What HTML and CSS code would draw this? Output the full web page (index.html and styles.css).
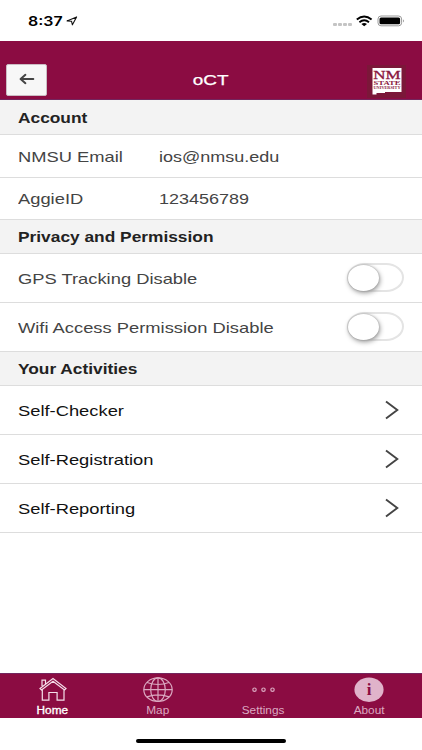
FILE: index.html
```html
<!DOCTYPE html>
<html lang="en">
<head>
<meta charset="utf-8">
<title>oCT</title>
<link rel="stylesheet" href="styles.css">
</head>
<body>
<div class="status">
  <span class="time"><span class="wide">8:37</span></span>
  <svg class="loc" width="12" height="10" viewBox="0 0 12 10"><path d="M1 4.9 10.6.9 6.4 8.8 5.5 5.2Z" fill="none" stroke="#111" stroke-width="1.1" stroke-linejoin="round"/></svg>
  <svg class="signals" width="74" height="14" viewBox="0 0 74 14">
    <g fill="#c4c4c4"><rect x="1" y="8" width="4" height="3" rx="1"/><rect x="6" y="8" width="4" height="3" rx="1"/><rect x="11" y="8" width="4" height="3" rx="1"/><rect x="16" y="8" width="4" height="3" rx="1"/></g>
    <g fill="none" stroke="#000" stroke-width="1.9"><path d="M24.8 4.6Q32.2-1.5 39.6 4.6M27.4 7.3Q32.2 3.4 37 7.3"/></g>
    <path d="M29.4 9Q32.2 7 35 9L32.2 11.2Z"/>
    <rect x="46" y="1" width="23.6" height="9.8" rx="3" fill="none" stroke="#999"/>
    <rect x="47.5" y="2.5" width="20.6" height="6.8" rx="1.5"/>
    <path d="M71.1 4.2Q72.9 5.9 71.1 7.6Z" fill="#777"/>
  </svg>
</div>
<header class="header">
  <button class="back" aria-label="Back"><svg width="16" height="12" viewBox="0 0 16 12"><path d="M14.3 6H2M6.4 1.8 1.6 6l4.8 4.2" fill="none" stroke="#444" stroke-width="2" stroke-linecap="round" stroke-linejoin="round"/></svg></button>
  <h1><span class="wide">oCT</span></h1>
  <svg class="logo" width="39" height="33" viewBox="0 0 39 33">
    <rect width="39" height="33" fill="#7b1739"/>
    <path d="M5.5 3H34.5V27H18V28H9.5V29.5H5.5Z" fill="#fff"/>
    <g fill="#8a1740" font-family="Liberation Serif, serif">
      <text x="6.2" y="13.8" font-size="13.5" textLength="27.4" lengthAdjust="spacingAndGlyphs" stroke="#8a1740" stroke-width=".3">NM</text>
      <text x="6.5" y="20" font-size="6.8" font-weight="bold" textLength="27" lengthAdjust="spacingAndGlyphs">STATE</text>
      <text x="6.5" y="24" font-size="3.8" font-weight="bold" textLength="27" lengthAdjust="spacingAndGlyphs">UNIVERSITY</text>
    </g>
  </svg>
</header>
<main>
  <h2><span class="wide">Account</span></h2>
  <div class="row info"><span class="label"><span class="wide">NMSU Email</span></span><span class="wide value">ios@nmsu.edu</span></div>
  <div class="row info last"><span class="label"><span class="wide">AggieID</span></span><span class="wide value">123456789</span></div>
  <h2 class="short"><span class="wide">Privacy and Permission</span></h2>
  <div class="row"><span class="wide">GPS Tracking Disable</span><span class="toggle"><span class="knob"></span></span></div>
  <div class="row"><span class="wide">Wifi Access Permission Disable</span><span class="toggle"><span class="knob"></span></span></div>
  <h2 class="short"><span class="wide">Your Activities</span></h2>
  <div class="row link"><span class="wide">Self-Checker</span><svg class="chevron" width="14" height="20" viewBox="0 0 14 20"><path d="M1 1.5 12.3 10 1 18.5"/></svg></div>
  <div class="row link"><span class="wide">Self-Registration</span><svg class="chevron" width="14" height="20" viewBox="0 0 14 20"><path d="M1 1.5 12.3 10 1 18.5"/></svg></div>
  <div class="row link"><span class="wide">Self-Reporting</span><svg class="chevron" width="14" height="20" viewBox="0 0 14 20"><path d="M1 1.5 12.3 10 1 18.5"/></svg></div>
</main>
<nav class="tabs">
  <div class="tab active"><svg width="30" height="26" viewBox="0 0 30 26"><path d="M2 11.5 15 1.5 28 11.5 26.5 13 15 4.3 3.5 13ZM4 9V3.2H7.5V7M4.3 12.8V23.2H10.9V15.5H19.1V23.2H26V12.8"/></svg><span class="wide">Home</span></div>
  <div class="tab"><svg width="30" height="26" viewBox="0 0 30 26"><ellipse cx="15" cy="12.7" rx="14.2" ry="11.8"/><ellipse cx="15" cy="12.7" rx="7.3" ry="11.8"/><path d="M15 .9V24.5M.8 12.7H29.2M4 5.5Q15 9.5 26 5.5M4 19.9Q15 15.9 26 19.9"/></svg><span class="wide">Map</span></div>
  <div class="tab"><svg width="30" height="26" viewBox="0 0 30 26"><circle cx="5.5" cy="12.7" r="1.7"/><circle cx="14.5" cy="12.7" r="1.7"/><circle cx="23.5" cy="12.7" r="1.7"/></svg><span class="wide">Settings</span></div>
  <div class="tab"><svg width="30" height="26" viewBox="0 0 30 26"><ellipse class="disc" cx="15" cy="12.7" rx="14.6" ry="12.2"/><text class="letter" x="15" y="18.4" text-anchor="middle">i</text></svg><span class="wide">About</span></div>
</nav>
<footer><div class="home-bar"></div></footer>
</body>
</html>
```
FILE: styles.css
```css
* { box-sizing: border-box; }
body {
  margin: 0;
  width: 422px;
  height: 750px;
  overflow: hidden;
  display: flex;
  flex-direction: column;
  background: #fff;
  font-family: "Liberation Sans", Arial, sans-serif;
  font-size: 15px;
  color: #444;
}
.wide {
  display: inline-block;
  white-space: nowrap;
  transform: scaleX(1.222);
  transform-origin: left center;
}
.wide.value { transform: scaleX(1.2); }
.status {
  height: 41px;
  flex: none;
  display: flex;
  align-items: flex-start;
  padding: 14px 16px 0 28px;
}
.time {
  width: 38px;
  font: 600 13.5px/14px Inter, sans-serif;
  color: #000;
}
.time .wide { transform: scaleX(1.18); }
.loc { margin-top: 2px; }
.signals { margin: 1px 0 0 auto; }
.header {
  height: 59px;
  flex: none;
  display: grid;
  grid-template-columns: 1fr auto 1fr;
  align-items: start;
  padding: 23px 16px 0 6px;
  background: #8b0c42;
  border-bottom: 1px solid #73265e;
}
.back {
  width: 41px;
  height: 32px;
  padding: 0;
  display: flex;
  align-items: center;
  justify-content: center;
  background: #f7f7f7;
  border: 1px solid #cbbdc4;
  border-radius: 2px;
}
.back svg { margin-top: -2px; }
h1 {
  margin: 7px 0 0 10px;
  font-size: 15.5px;
  line-height: 18px;
  font-weight: 400;
  color: #fff;
}
h1 .wide { transform-origin: center; -webkit-text-stroke: .25px; }
.logo { justify-self: end; margin-top: 1px; }
main { flex: 1; }
h2 {
  margin: 0;
  height: 35px;
  padding: 1px 0 0 18px;
  display: flex;
  align-items: center;
  background: #f3f3f3;
  border-bottom: 1px solid #ddd;
  font-size: 15px;
  color: #222;
}
h2 .wide { transform: scaleX(1.155); }
h2.short { height: 34px; padding-top: 0; }
.row {
  height: 49px;
  padding: 0 18px;
  display: flex;
  align-items: center;
  border-bottom: 1px solid #ddd;
}
.info { height: 43px; padding-top: 1px; }
.info.last { height: 42px; padding-top: 0; }
.label { width: 141px; }
.link { color: #111; }
.toggle {
  width: 57px;
  height: 29px;
  margin: -2px 0 0 auto;
  border: 2px solid #e4e4e4;
  border-radius: 18px / 14.5px;
}
.knob {
  display: block;
  width: 31px;
  height: 26px;
  margin-left: -1px;
  background: #fff;
  border-radius: 50%;
  box-shadow: 0 0 2px #999, 1px 2px 5px #999;
}
.chevron {
  margin: 0 5px 0 auto;
  fill: none;
  stroke: #444;
  stroke-width: 1.9;
}
.tabs {
  height: 45px;
  flex: none;
  display: grid;
  grid-template-columns: repeat(4, 1fr);
  background: #8b0c42;
  border-top: 1px solid #73265e;
}
.tab {
  display: flex;
  flex-direction: column;
  align-items: center;
  padding-top: 3px;
  color: #dba9c1;
  font-size: 10px;
  line-height: 12px;
}
.tab svg {
  fill: none;
  stroke: #dba9c1;
  stroke-width: 1.2;
}
.tab .wide {
  transform: scaleX(1.18);
  transform-origin: center;
  margin: 2px 1px 0 0;
}
.tab.active { color: #fff; }
.tab.active .wide { -webkit-text-stroke: .3px; }
.tab.active svg { stroke: #f5dfea; }
.tab .disc { fill: #e0b3ca; stroke: none; }
.tab .letter {
  fill: #8b0c42;
  stroke: none;
  font: bold 17px "Liberation Serif", serif;
}
footer {
  height: 32px;
  flex: none;
  display: flex;
  justify-content: center;
  padding-top: 21px;
}
.home-bar {
  width: 150px;
  height: 4px;
  border-radius: 2px;
  background: #000;
}
```
